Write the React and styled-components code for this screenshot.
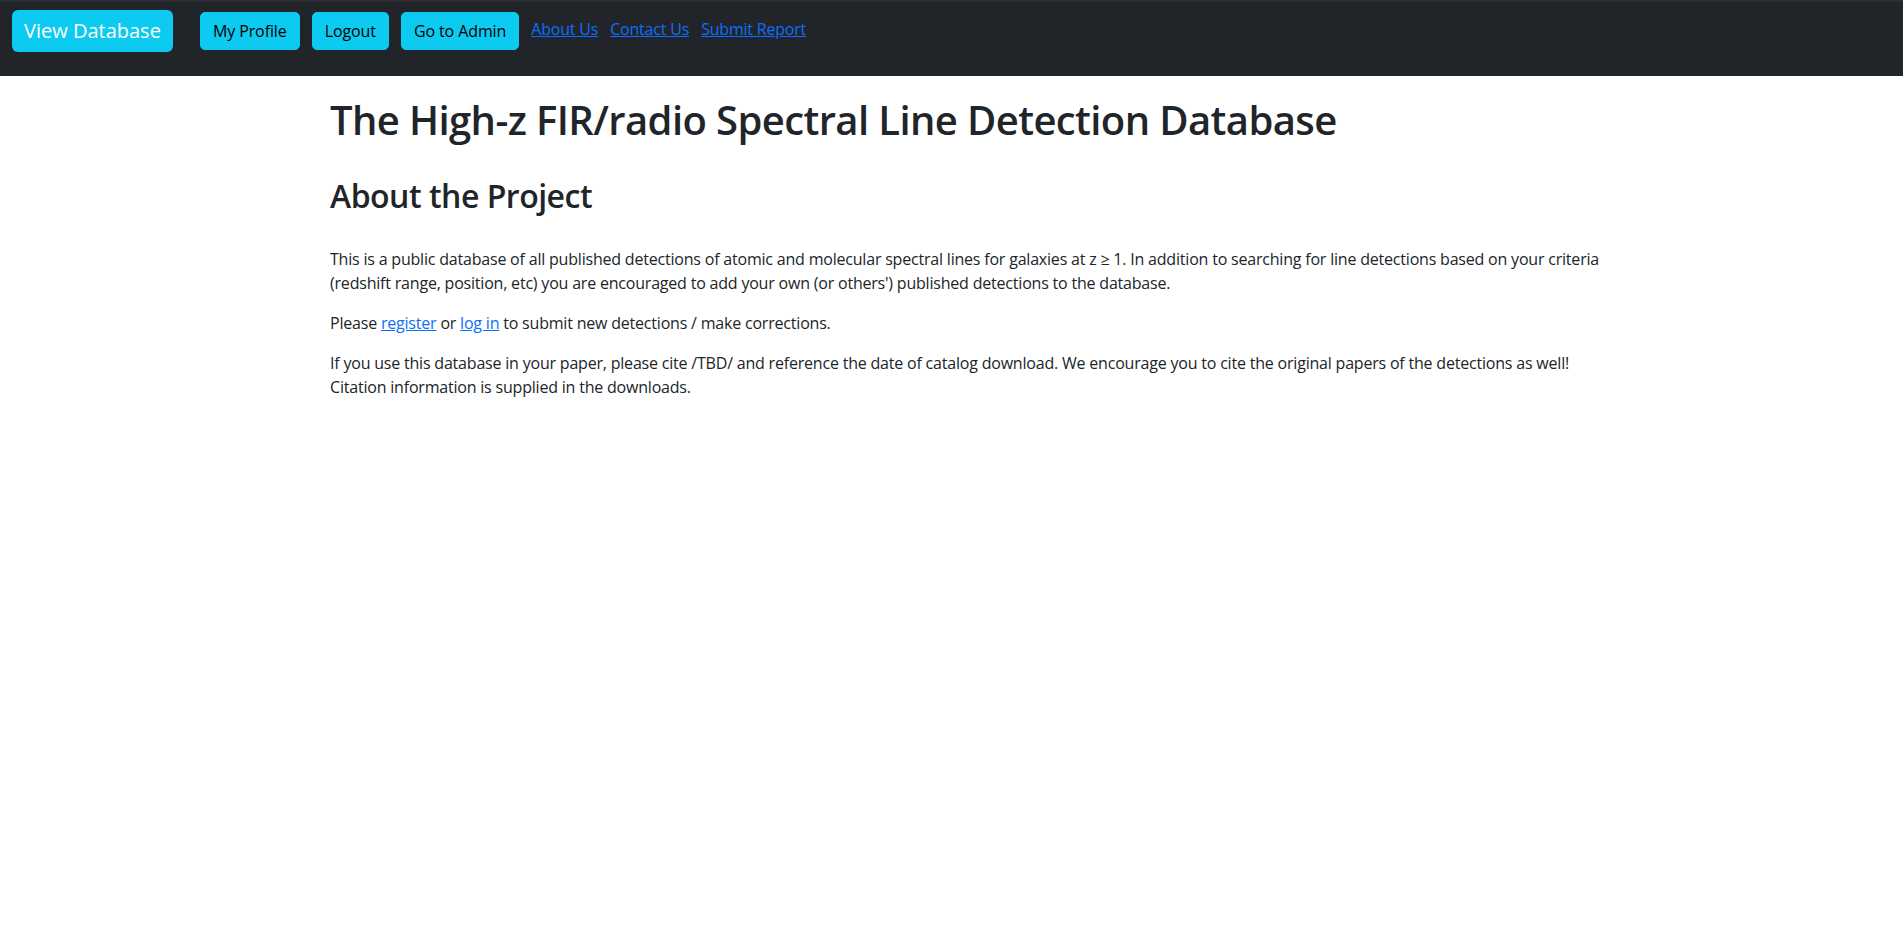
import React from "react";
import styled, { createGlobalStyle } from "styled-components";

const GlobalStyle = createGlobalStyle`
  body {
    margin: 0;
    background: #fff;
    color: #212529;
    font-family: "Open Sans", "Noto Sans", sans-serif;
    font-size: 16px;
    line-height: 1.5;
  }
`;

const Navbar = styled.nav`
  height: 76px;
  box-sizing: border-box;
  background: #212529;
  border-top: 2px solid #2c2f34;
  padding: 8px 12px 0;
`;

const NavRow = styled.div`
  display: flex;
  align-items: center;
  height: 42px;
`;

const BrandButton = styled.a`
  display: inline-flex;
  align-items: center;
  height: 42px;
  box-sizing: border-box;
  padding: 0 12px;
  margin-right: 27px;
  background: #0dcaf0;
  color: #fff;
  font-size: 20px;
  border-radius: 6px;
  text-decoration: none;
  cursor: pointer;
`;

const NavButtons = styled.div`
  display: flex;
  align-items: center;
  gap: 12px;
`;

const Button = styled.button`
  height: 38px;
  box-sizing: border-box;
  padding: 0 12px;
  border: 1px solid #0dcaf0;
  background: #0dcaf0;
  color: #000;
  font-family: inherit;
  font-size: 16px;
  letter-spacing: -0.1px;
  border-radius: 5px;
  cursor: pointer;
`;

const NavLinks = styled.div`
  display: flex;
  gap: 12px;
  margin-left: 12px;
  margin-bottom: 4px;
  letter-spacing: -0.2px;
`;

const Link = styled.a`
  color: #0d6efd;
  text-decoration: underline;
  cursor: pointer;
`;

const Container = styled.main`
  width: 1296px;
  margin-left: 330px;
`;

const Title = styled.h1`
  margin: 20px 0 33px;
  font-size: 40px;
  font-weight: 600;
  letter-spacing: -0.6px;
  line-height: 1.2;
`;

const Subtitle = styled.h2`
  margin: 0 0 32px;
  font-size: 32px;
  font-weight: 600;
  letter-spacing: -0.5px;
  line-height: 1.2;
`;

const Text = styled.p`
  margin: 0 0 16px;
  letter-spacing: -0.2px;
`;

export default function App() {
  return (
    <>
      <GlobalStyle />
      <Navbar>
        <NavRow>
          <BrandButton>View Database</BrandButton>
          <NavButtons>
            <Button>My Profile</Button>
            <Button>Logout</Button>
            <Button>Go to Admin</Button>
          </NavButtons>
          <NavLinks>
            <Link>About Us</Link>
            <Link>Contact Us</Link>
            <Link>Submit Report</Link>
          </NavLinks>
        </NavRow>
      </Navbar>
      <Container>
        <Title>The High-z FIR/radio Spectral Line Detection Database</Title>
        <Subtitle>About the Project</Subtitle>
        <Text>
          This is a public database of all published detections of atomic and molecular spectral lines for
          galaxies at z ≥ 1. In addition to searching for line detections based on your criteria (redshift
          range, position, etc) you are encouraged to add your own (or others') published detections to the
          database.
        </Text>
        <Text>
          Please <Link>register</Link> or <Link>log in</Link> to submit new detections / make corrections.
        </Text>
        <Text>
          If you use this database in your paper, please cite /TBD/ and reference the date of catalog download.
          We encourage you to cite the original papers of the detections as well! Citation information is
          supplied in the downloads.
        </Text>
      </Container>
    </>
  );
}
